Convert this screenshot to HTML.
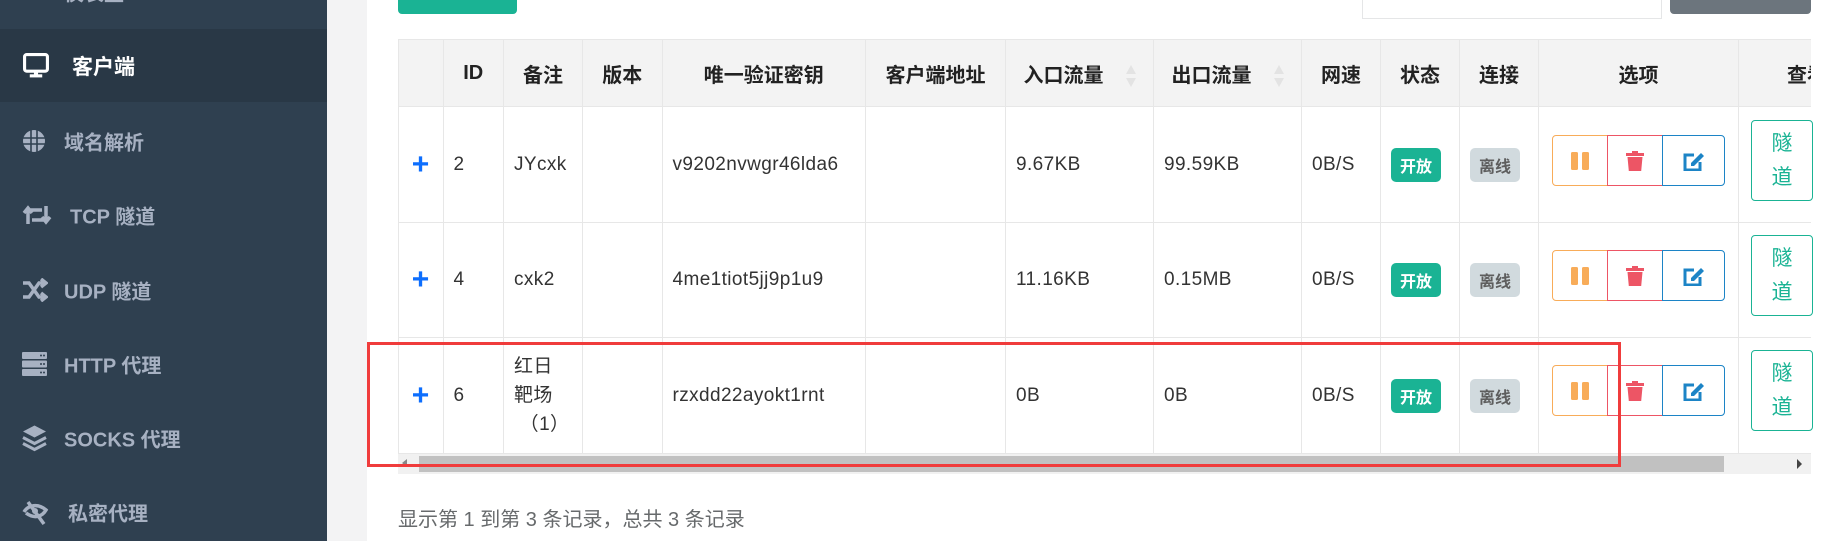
<!DOCTYPE html>
<html style="background:#fff"><head><meta charset="utf-8"><style>
*{margin:0;padding:0;box-sizing:border-box}
html,body{width:1826px;height:541px;overflow:hidden}
body{background:#f3f3f4;font-family:"Liberation Sans","Noto Sans CJK SC",sans-serif;position:relative}
#side{position:absolute;left:0;top:0;width:327px;height:541px;background:#2f4050}
.it{position:absolute;left:0;width:327px;height:74px;color:#a7b1c2;font-size:20px;font-weight:bold}
.it svg{position:absolute;left:22px;top:50%;transform:translateY(-50%)}
.it span{position:absolute;left:64px;top:50%;transform:translateY(-50%)}
#panel{position:absolute;left:367px;top:0;width:1459px;height:541px;background:#fff}
.abs{position:absolute}
table{border-collapse:collapse;table-layout:fixed;font-size:19px;letter-spacing:0.4px;color:#333}
td,th{border:1px solid #e7e7e7;text-align:left;padding:0 0 0 10px;vertical-align:middle}
th{background:#f3f3f3;font-weight:bold;text-align:center;padding:0;height:67px;color:#222;font-size:20px;letter-spacing:0}
.plus{color:#0d6efd;font-size:30px;font-weight:bold;text-align:center;padding:0}
.badge{display:inline-block;font-size:16px;font-weight:bold;padding:5px 9px;border-radius:5px;letter-spacing:0}
.g{background:#1ab394;color:#fff}.gr{background:#d1dade;color:#5e5e5e}
.bg{position:absolute;height:51px;border:1px solid;display:flex;align-items:center;justify-content:center}
.tun{position:absolute;width:62px;height:81px;border:1px solid #1ab394;border-radius:4px;color:#1ab394;font-size:21px;text-align:center;line-height:34px;padding-top:6px}
.sort{display:inline-block;vertical-align:middle;margin-left:22px;width:10px;height:22px;position:relative}
.sort:before{content:"";position:absolute;left:0;top:0;border:5px solid transparent;border-bottom:9px solid #e3e3e3;border-top:0}
.sort:after{content:"";position:absolute;left:0;bottom:0;border:5px solid transparent;border-top:9px solid #e3e3e3;border-bottom:0}
</style></head><body>
<div id="side">
 <div class="it" style="top:-45px"><svg width="26" height="22" viewBox="0 0 26 22"><rect x="0" y="0" width="26" height="16" fill="#a7b1c2"/></svg><span>仪表盘</span></div>
 <div class="it" style="top:29px;height:73px;background:#293846;color:#fff;font-size:21px"><svg width="28" height="27" viewBox="0 0 26 26"><rect x="2" y="2" width="22" height="16" rx="2" fill="none" stroke="#fff" stroke-width="3"/><rect x="11" y="18" width="4" height="4" fill="#fff"/><rect x="7" y="21" width="12" height="3" fill="#fff"/></svg><span style="left:72px">客户端</span></div>
 <div class="it" style="top:104px"><svg width="24" height="24" viewBox="0 0 24 24"><circle cx="12" cy="12" r="11" fill="#a7b1c2"/><path d="M1 9h22M1 15h22M9 1v22M15 1v22" stroke="#2f4050" stroke-width="1.6"/></svg><span style="left:64px">域名解析</span></div>
 <div class="it" style="top:178px"><svg width="30" height="22" viewBox="0 0 30 22"><path d="M6 20V6h14M2 9l4-5 4 5M24 2v14H10M20 13l4 5 4-5" fill="none" stroke="#a7b1c2" stroke-width="3.5"/></svg><span style="left:70px">TCP 隧道</span></div>
 <div class="it" style="top:253px"><svg width="26" height="24" viewBox="0 0 26 24"><path d="M1 5h6l10 14h5M1 19h6l10-14h5M19 1l5 4-5 4M19 15l5 4-5 4" fill="none" stroke="#a7b1c2" stroke-width="3.5"/></svg><span>UDP 隧道</span></div>
 <div class="it" style="top:327px"><svg width="25" height="24" viewBox="0 0 25 24"><rect y="0" width="25" height="7" rx="1" fill="#a7b1c2"/><rect y="8.5" width="25" height="7" rx="1" fill="#a7b1c2"/><rect y="17" width="25" height="7" rx="1" fill="#a7b1c2"/><circle cx="19" cy="3.5" r="1" fill="#2f4050"/><circle cx="22" cy="3.5" r="1" fill="#2f4050"/><circle cx="19" cy="12" r="1" fill="#2f4050"/><circle cx="22" cy="12" r="1" fill="#2f4050"/><circle cx="19" cy="20.5" r="1" fill="#2f4050"/><circle cx="22" cy="20.5" r="1" fill="#2f4050"/></svg><span>HTTP 代理</span></div>
 <div class="it" style="top:401px"><svg width="25" height="27" viewBox="0 0 25 27"><path d="M12.5 1L24 7l-11.5 6L1 7z" fill="#a7b1c2"/><path d="M1 13l11.5 6L24 13M1 19l11.5 6L24 19" fill="none" stroke="#a7b1c2" stroke-width="3"/></svg><span>SOCKS 代理</span></div>
 <div class="it" style="top:475px"><svg width="28" height="28" viewBox="0 0 28 28"><path d="M2 14c4-7 14-9 22-2-4 7-12 9-20 3" fill="none" stroke="#a7b1c2" stroke-width="3.5"/><circle cx="13" cy="13" r="3" fill="#a7b1c2"/><path d="M6 4l16 22" stroke="#a7b1c2" stroke-width="3.5"/></svg><span style="left:68px">私密代理</span></div>
</div>
<div id="panel"></div>
<div class="abs" style="left:398px;top:0;width:119px;height:14px;background:#1ab394;border-radius:0 0 4px 4px"></div>
<div class="abs" style="left:1362px;top:-2px;width:300px;height:21px;border:1px solid #e5e6e7;background:#fff"></div>
<div class="abs" style="left:1670px;top:0;width:141px;height:14px;background:#6c757d;border-radius:0 0 4px 4px"></div>
<div class="abs" style="left:398px;top:39px;width:1413px;height:435px;overflow:hidden;background:#f1f1f1">
<table style="width:1500px">
<colgroup><col style="width:44.5px"><col style="width:60.5px"><col style="width:79px"><col style="width:79.5px"><col style="width:203.5px"><col style="width:140px"><col style="width:148px"><col style="width:148px"><col style="width:79px"><col style="width:79px"><col style="width:79px"><col style="width:200px"><col style="width:160px"></colgroup>
<tr><th></th><th>ID</th><th>备注</th><th>版本</th><th>唯一验证密钥</th><th>客户端地址</th><th>入口流量<i class="sort"></i></th><th>出口流量<i class="sort"></i></th><th>网速</th><th>状态</th><th>连接</th><th>选项</th><th style="text-align:left;padding-left:48px">查看</th></tr>
<tr style="height:116px;background:#fff"><td class="plus">+</td><td>2</td><td>JYcxk</td><td></td><td>v9202nvwgr46lda6</td><td></td><td>9.67KB</td><td>99.59KB</td><td>0B/S</td><td><span class="badge g">开放</span></td><td><span class="badge gr">离线</span></td><td></td><td></td></tr>
<tr style="height:115px;background:#fff"><td class="plus">+</td><td>4</td><td>cxk2</td><td></td><td>4me1tiot5jj9p1u9</td><td></td><td>11.16KB</td><td>0.15MB</td><td>0B/S</td><td><span class="badge g">开放</span></td><td><span class="badge gr">离线</span></td><td></td><td></td></tr>
<tr style="height:116px;background:#fff"><td class="plus">+</td><td>6</td><td style="line-height:29px">红日<br>靶场<br>&nbsp;（1）</td><td></td><td>rzxdd22ayokt1rnt</td><td></td><td>0B</td><td>0B</td><td>0B/S</td><td><span class="badge g">开放</span></td><td><span class="badge gr">离线</span></td><td></td><td></td></tr>
</table>
<div class="abs" style="left:21px;top:417px;width:1305px;height:16px;background:#c1c1c1"></div>
<div class="abs" style="left:4px;top:420px;border:4px solid transparent;border-right:5px solid #888;border-left:0"></div>
<div class="abs" style="left:1399px;top:420px;border:5px solid transparent;border-left:5px solid #444;border-right:0"></div>
</div>
<div id="btns"></div>
<div class="abs" style="left:398px;top:503px;font-size:20px;color:#676a6c">显示第 1 到第 3 条记录，总共 3 条记录</div>
<div class="abs" style="left:367px;top:342px;width:1254px;height:125px;border:3px solid #f03c3c"></div>
<script>
var tops=[135,250,365],h='';
tops.forEach(function(t){
h+='<div class="bg" style="left:1552px;top:'+t+'px;width:56px;border-color:#f8ac59;border-radius:4px 0 0 4px"><svg width="18" height="18"><rect x="0" y="0" width="7" height="18" rx="1.5" fill="#f8ac59"/><rect x="11" y="0" width="7" height="18" rx="1.5" fill="#f8ac59"/></svg></div>';
h+='<div class="bg" style="left:1607px;top:'+t+'px;width:56px;border-color:#ed5565"><svg width="18" height="20"><rect x="0" y="2" width="18" height="3" fill="#ed5565"/><rect x="6" y="0" width="6" height="3" fill="#ed5565"/><path d="M1.5 6h15l-1.3 14H2.8z" fill="#ed5565"/></svg></div>';
h+='<div class="bg" style="left:1662px;top:'+t+'px;width:63px;border-color:#1c84c6;border-radius:0 4px 4px 0"><svg width="22" height="20"><path d="M11 4H2v15h15v-8" fill="none" stroke="#1c84c6" stroke-width="3"/><path d="M8 12l10-10 3 3-10 10H8z" fill="#1c84c6"/></svg></div>';
h+='<div class="tun" style="left:1751px;top:'+(t-15)+'px">隧<br>道</div>';
});
document.getElementById('btns').innerHTML=h;
</script>
</body></html>
